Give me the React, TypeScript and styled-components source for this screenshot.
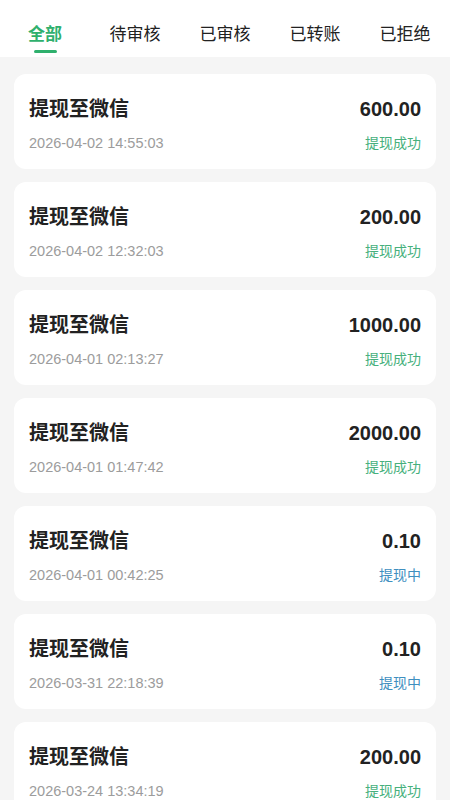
import styled, { createGlobalStyle } from 'styled-components'

const GlobalStyle = createGlobalStyle`
  html, body {
    margin: 0;
    padding: 0;
    background: #f5f5f5;
    font-family: 'Liberation Sans', 'Noto Sans CJK SC', sans-serif;
  }
`

type Status = 'success' | 'pending'

interface Record {
  amount: string
  time: string
  status: Status
}

const tabs = ['全部', '待审核', '已审核', '已转账', '已拒绝']

const records: Record[] = [
  { amount: '600.00', time: '2026-04-02 14:55:03', status: 'success' },
  { amount: '200.00', time: '2026-04-02 12:32:03', status: 'success' },
  { amount: '1000.00', time: '2026-04-01 02:13:27', status: 'success' },
  { amount: '2000.00', time: '2026-04-01 01:47:42', status: 'success' },
  { amount: '0.10', time: '2026-04-01 00:42:25', status: 'pending' },
  { amount: '0.10', time: '2026-03-31 22:18:39', status: 'pending' },
  { amount: '200.00', time: '2026-03-24 13:34:19', status: 'success' },
]

export default function App() {
  return (
    <>
      <GlobalStyle />
      <Page>
        <TabBar>
          {tabs.map((t, i) => (
            <Tab key={t} $active={i === 0}>
              {t}
            </Tab>
          ))}
        </TabBar>
        <List>
          {records.map((r, i) => (
            <Card key={i}>
              <Row>
                <Title>提现至微信</Title>
                <Amount>{r.amount}</Amount>
              </Row>
              <Row>
                <Time>{r.time}</Time>
                <StatusText $status={r.status}>
                  {r.status === 'success' ? '提现成功' : '提现中'}
                </StatusText>
              </Row>
            </Card>
          ))}
        </List>
      </Page>
    </>
  )
}

const Page = styled.div`
  width: 450px;
  height: 800px;
  overflow: hidden;
  background: #f5f5f5;
`

const TabBar = styled.div`
  display: grid;
  grid-template-columns: repeat(5, 90px);
  height: 57px;
  background: #fff;
`

const Tab = styled.div<{ $active: boolean }>`
  position: relative;
  display: flex;
  justify-content: center;
  padding-top: 23px;
  font-size: 17px;
  line-height: 24px;
  color: ${(p) => (p.$active ? '#2fb06d' : '#222')};
  font-weight: ${(p) => (p.$active ? 600 : 400)};

  &::after {
    content: '';
    display: ${(p) => (p.$active ? 'block' : 'none')};
    position: absolute;
    left: 34px;
    top: 50px;
    width: 23px;
    height: 3px;
    border-radius: 2px;
    background: #2fb06d;
  }
`

const List = styled.div`
  display: flex;
  flex-direction: column;
  gap: 13px;
  padding: 17px 14px 0;
`

const Card = styled.div`
  display: flex;
  flex-direction: column;
  gap: 11px;
  height: 95px;
  box-sizing: border-box;
  padding: 22px 15px 0;
  background: #fff;
  border-radius: 12px;
`

const Row = styled.div`
  display: flex;
  justify-content: space-between;
  align-items: center;
`

const Title = styled.div`
  font-size: 20px;
  line-height: 26px;
  font-weight: 700;
  color: #222;
`

const Amount = styled.div`
  font-size: 20px;
  line-height: 26px;
  font-weight: 700;
  color: #222;
`

const Time = styled.div`
  font-size: 14.5px;
  line-height: 20px;
  color: #9c9c9c;
`

const StatusText = styled.div<{ $status: Status }>`
  font-size: 14px;
  line-height: 20px;
  color: ${(p) => (p.$status === 'success' ? '#46b07c' : '#3f8fbf')};
`
